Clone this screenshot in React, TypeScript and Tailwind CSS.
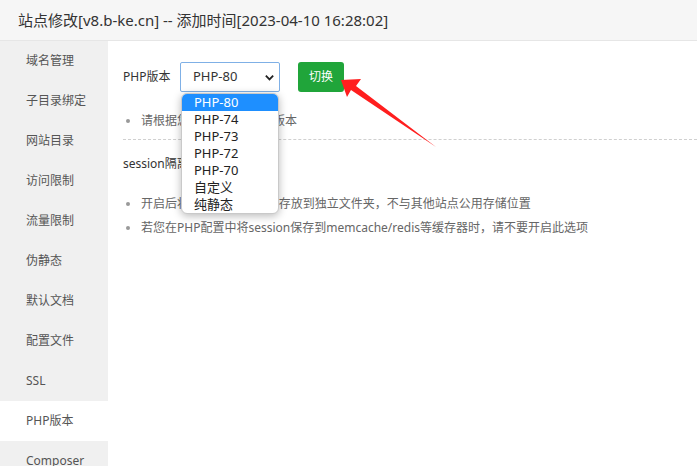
import React from "react";

const menu = [
  "域名管理",
  "子目录绑定",
  "网站目录",
  "访问限制",
  "流量限制",
  "伪静态",
  "默认文档",
  "配置文件",
  "SSL",
  "PHP版本",
  "Composer",
];

const versions = ["PHP-80", "PHP-74", "PHP-73", "PHP-72", "PHP-70", "自定义", "纯静态"];

const font = { fontFamily: '"Noto Sans", "Noto Sans CJK SC", sans-serif' };

export default function App() {
  return (
    <div className="relative w-[697px] h-[466px] overflow-hidden bg-white text-[#333]" style={font}>
      {/* title bar */}
      <div className="h-[41px] bg-[#f6f6f6] border-b border-[#e6e6e6] flex items-center pl-[18px] text-[15px] text-[#333]">
        站点修改[v8.b-ke.cn] -- 添加时间[2023-04-10 16:28:02]
      </div>

      <div className="flex">
        {/* side menu */}
        <div className="w-[108px] shrink-0 bg-[#f0f0f0]">
          {menu.map((m) => (
            <div
              key={m}
              className={`h-[40px] flex items-center pl-[26px] text-[12px] text-[#555] ${
                m === "PHP版本" ? "bg-white" : ""
              }`}
            >
              {m}
            </div>
          ))}
        </div>

        {/* content */}
        <div className="flex-1 pl-[15px] pt-[21px]">
          <div className="flex items-center h-[30px]">
            <span className="text-[12px] text-[#333] w-[57px]">PHP版本</span>
            <div className="relative">
              <div className="w-[100px] h-[30px] border border-[#7fb0e6] rounded-[2px] flex items-center justify-between pl-[12px] pr-[4px] text-[13px] text-[#333]">
                <span>PHP-80</span>
                <svg width="11" height="11" viewBox="0 0 12 12">
                  <path d="M2 4 L6 8 L10 4" fill="none" stroke="#222" strokeWidth="2" />
                </svg>
              </div>
              {/* open dropdown */}
              <div className="absolute left-[1px] top-[31px] z-10 w-[98px] bg-white border border-[#c9c9c9] rounded-[6px] shadow-[0_2px_8px_rgba(0,0,0,0.28)] overflow-hidden text-[13px] text-[#222]">
                {versions.map((v, i) => (
                  <div
                    key={v}
                    className={`h-[17px] leading-[17px] pl-[12px] ${i === 0 ? "bg-[#1e8fff] text-white" : ""}`}
                  >
                    {v}
                  </div>
                ))}
              </div>
            </div>
            <button className="ml-[18px] w-[46px] h-[30px] bg-[#20a53a] rounded-[3px] text-white text-[12px]">
              切换
            </button>
          </div>

          <ul className="mt-[20px] pl-[3px] text-[12px] text-[#666]">
            <li className="flex items-center gap-[11px]">
              <span className="w-[4px] h-[4px] rounded-full bg-[#999]" />
              请根据您的程序需求选择版本
            </li>
          </ul>
          <div className="mt-[9px] border-t border-dashed border-[#d0d0d0]" />

          <div className="mt-[15px] text-[12px] text-[#333]">session隔离</div>

          <ul className="mt-[22px] pl-[3px] text-[12px] text-[#666] flex flex-col gap-[6px]">
            <li className="flex items-center gap-[11px] h-[18px]">
              <span className="w-[4px] h-[4px] rounded-full bg-[#999]" />
              开启后将会把session文件存放到独立文件夹，不与其他站点公用存储位置
            </li>
            <li className="flex items-center gap-[11px] h-[18px]">
              <span className="w-[4px] h-[4px] rounded-full bg-[#999]" />
              若您在PHP配置中将session保存到memcache/redis等缓存器时，请不要开启此选项
            </li>
          </ul>
        </div>
      </div>

      {/* red annotation arrow */}
      <svg className="absolute left-0 top-0 pointer-events-none" width="697" height="466">
        <polygon points="341,80 361,79 356,86 436,147 351,90 347,97" fill="#ff1e1e" />
      </svg>
    </div>
  );
}
